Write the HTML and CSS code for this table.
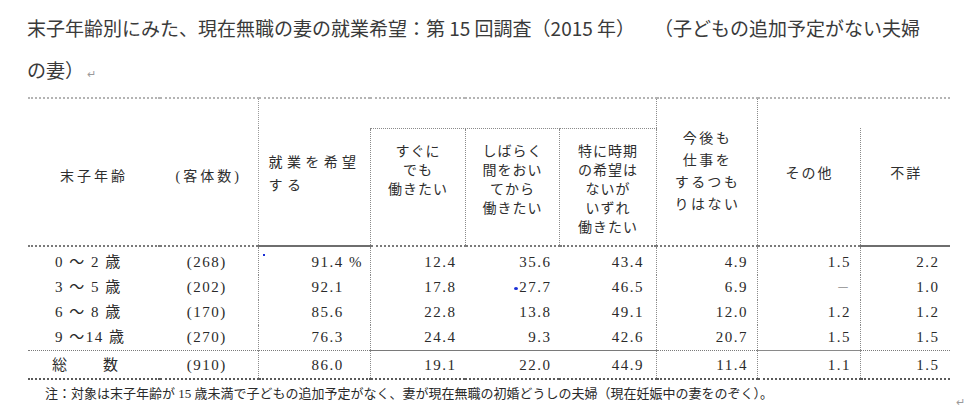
FILE: index.html
```html
<!DOCTYPE html>
<html lang="ja">
<head>
<meta charset="utf-8">
<title>末子年齢別にみた、現在無職の妻の就業希望</title>
<link rel="stylesheet" href="styles.css">
</head>
<body>
<p class="title">末子年齢別にみた、現在無職の妻の就業希望：第 15 回調査（2015 年<span class="full">）　（</span>子どもの追加予定がない夫婦<br>の妻）<span class="ret">↵</span></p>
<table class="tbl">
  <colgroup>
    <col class="w1"><col class="w2"><col class="w3"><col class="w4"><col class="w5"><col class="w6"><col class="w7"><col class="w8"><col class="w9">
  </colgroup>
  <thead>
    <tr class="h1">
      <th rowspan="2" class="hc hl">末子年齢</th>
      <th rowspan="2" class="hc">(客体数)</th>
      <th rowspan="2" class="hw">就業を希望<br>する</th>
      <th colspan="3" class="blank"></th>
      <th rowspan="2" class="hn">今後も<br>仕事を<br>するつも<br>りはない</th>
      <th colspan="2" class="blank2"></th>
    </tr>
    <tr class="h2">
      <th class="hs">すぐに<br>でも<br>働きたい</th>
      <th class="hs">しばらく<br>間をおい<br>てから<br>働きたい</th>
      <th class="hs">特に時期<br>の希望は<br>ないが<br>いずれ<br>働きたい</th>
      <th class="ho hoa">その他</th>
      <th class="ho hob">不詳</th>
    </tr>
  </thead>
  <tbody>
    <tr class="first">
      <td class="lab">0 ～ 2 歳</td>
      <td class="n">(268)</td>
      <td class="v c3"><span class="dot1"></span>91.4<span class="pct"> %</span></td>
      <td class="v c4">12.4</td>
      <td class="v c5">35.6</td>
      <td class="v c6">43.4</td>
      <td class="v c7">4.9</td>
      <td class="v c8">1.5</td>
      <td class="v c9">2.2</td>
    </tr>
    <tr>
      <td class="lab">3 ～ 5 歳</td>
      <td class="n">(202)</td>
      <td class="v c3">92.1<span class="pct hide"> %</span></td>
      <td class="v c4">17.8</td>
      <td class="v c5"><span class="dot2"></span>27.7</td>
      <td class="v c6">46.5</td>
      <td class="v c7">6.9</td>
      <td class="v c8"><span class="dash">－</span></td>
      <td class="v c9">1.0</td>
    </tr>
    <tr>
      <td class="lab">6 ～ 8 歳</td>
      <td class="n">(170)</td>
      <td class="v c3">85.6<span class="pct hide"> %</span></td>
      <td class="v c4">22.8</td>
      <td class="v c5">13.8</td>
      <td class="v c6">49.1</td>
      <td class="v c7">12.0</td>
      <td class="v c8">1.2</td>
      <td class="v c9">1.2</td>
    </tr>
    <tr>
      <td class="lab">9 ～14 歳</td>
      <td class="n">(270)</td>
      <td class="v c3">76.3<span class="pct hide"> %</span></td>
      <td class="v c4">24.4</td>
      <td class="v c5">9.3</td>
      <td class="v c6">42.6</td>
      <td class="v c7">20.7</td>
      <td class="v c8">1.5</td>
      <td class="v c9">1.5</td>
    </tr>
    <tr class="total">
      <td class="lab tot">総　　数</td>
      <td class="n">(910)</td>
      <td class="v c3">86.0<span class="pct hide"> %</span></td>
      <td class="v c4">19.1</td>
      <td class="v c5">22.0</td>
      <td class="v c6">44.9</td>
      <td class="v c7">11.4</td>
      <td class="v c8">1.1</td>
      <td class="v c9">1.5</td>
    </tr>
  </tbody>
</table>
<div class="note">
  <span class="note-text">注：対象は末子年齢が 15 歳未満で子どもの追加予定がなく、妻が現在無職の初婚どうしの夫婦（現在妊娠中の妻をのぞく）。</span>
  <span class="ret2">↵</span>
</div>
</body>
</html>
```
FILE: styles.css
```css
body {
  margin: 0;
  padding: 7px 0 0 27px;
  background: #fff;
  font-family: "Noto Sans CJK JP", sans-serif;
}

.title {
  margin: 0;
  height: 84px;
  font-size: 19px;
  line-height: 42px;
  color: #3a3a3a;
  white-space: nowrap;
}

.full {
  text-spacing-trim: space-all;
}

.ret {
  font-size: 11px;
  line-height: 0;
  color: #9a9a9a;
  margin-left: 3px;
}

.tbl {
  margin: 6px 0 0 1px;
  border-collapse: collapse;
  table-layout: fixed;
  width: 922px;
  font-family: "Liberation Serif", "Noto Sans CJK JP", serif;
  font-size: 15px;
  color: #2a2a2a;
}

.w1 { width: 132px; }
.w2 { width: 98px; }
.w3 { width: 112px; }
.w4 { width: 95px; }
.w5 { width: 94px; }
.w6 { width: 97px; }
.w7 { width: 101px; }
.w8 { width: 103px; }
.w9 { width: 90px; }

th {
  font-weight: normal;
  padding: 0;
  font-size: 14px;
  color: #2e2e2e;
}

.h1 { height: 30px; }
.h2 { height: 118px; }

.h1 th {
  border-top: 2px dotted #b4b4b4;
}

.hc {
  text-align: center;
  vertical-align: middle;
  letter-spacing: 3px;
  padding-top: 6px;
  border-bottom: 2px dotted #7a7a7a;
}

.hw {
  text-align: left;
  vertical-align: middle;
  padding: 4px 0 0 10px;
  line-height: 23px;
  letter-spacing: 4.4px;
  border-left: 1px dotted #9a9a9a;
  border-bottom: 2px solid #6e6e6e;
}

.blank {
  border-left: none;
  border-bottom: 1px dotted #8a8a8a;
}

.blank2 {
  border-bottom: none;
}

.hs {
  text-align: center;
  vertical-align: top;
  padding: 13px 0 0 1px;
  line-height: 19px;
  letter-spacing: 1px;
  border-left: 1px dotted #8a8a8a;
  border-right: 1px dotted #8a8a8a;
  border-bottom: 2px dotted #7a7a7a;
}

.hn {
  text-align: center;
  vertical-align: middle;
  padding: 0 0 0 2px;
  line-height: 22px;
  letter-spacing: 2.5px;
  border-left: 1px dotted #8a8a8a;
  border-right: 1px dotted #8a8a8a;
  border-bottom: 2px dotted #7a7a7a;
}

.ho {
  text-align: center;
  vertical-align: top;
  padding: 36px 0 0 2px;
  line-height: 20px;
  letter-spacing: 2px;
}

.hoa {
  border-right: 1px dotted #8a8a8a;
  border-bottom: 2px dotted #7a7a7a;
}

.hob {
  border-bottom: 2px solid #6e6e6e;
}

td {
  padding: 0;
  height: 25px;
  line-height: 25px;
  letter-spacing: 1.5px;
  vertical-align: bottom;
  white-space: nowrap;
}

.first td {
  height: 28px;
}

.lab {
  text-align: left;
  padding-left: 27px;
}

.lab.tot {
  padding-left: 24px;
  letter-spacing: 2px;
}

.n {
  text-align: center;
  padding-right: 4px;
}

.v {
  text-align: right;
}

.c3 {
  position: relative;
  padding-right: 6.5px;
  border-left: 1px dotted #8a8a8a;
  border-right: 1px dotted #8a8a8a;
}

.c4 { padding-right: 8.5px; }
.c5 { padding-right: 7.5px; }
.c6 { padding-right: 11.5px; border-right: 1px dotted #8a8a8a; }
.c7 { padding-right: 8.5px; border-right: 1px dotted #8a8a8a; }
.c8 { padding-right: 8.5px; border-right: 1px dotted #8a8a8a; }
.c9 { padding-right: 10.5px; }

.pct.hide {
  visibility: hidden;
}

.dot1 {
  position: absolute;
  left: 4px;
  top: 7px;
  width: 2px;
  height: 2px;
  background: #1a2fd6;
}

.dot2 {
  display: inline-block;
  width: 4px;
  height: 3px;
  margin-right: 1px;
  border-radius: 50%;
  background: #1a2fd6;
  vertical-align: middle;
}

.dash {
  color: #a0a0a0;
  font-size: 13px;
}

.total td {
  height: 27px;
  line-height: 25px;
  border-top: 1px dotted #7a7a7a;
  border-bottom: 2px dotted #5a5a5a;
}

.total .c4,
.total .c5,
.total .c6 {
  border-top: 1px solid #7a7a7a;
}

.total .c8 {
  border-top: 1px solid #8a8a8a;
}

.note {
  display: flex;
  justify-content: space-between;
  align-items: flex-start;
  width: 920px;
  margin-top: 4px;
  padding-left: 18px;
  font-family: "Liberation Serif", "Noto Sans CJK JP", serif;
  font-size: 13px;
  line-height: 20px;
  color: #2a2a2a;
}

.ret2 {
  font-family: "Noto Sans CJK JP", sans-serif;
  font-size: 11px;
  color: #9a9a9a;
  margin-top: 7px;
}
```
